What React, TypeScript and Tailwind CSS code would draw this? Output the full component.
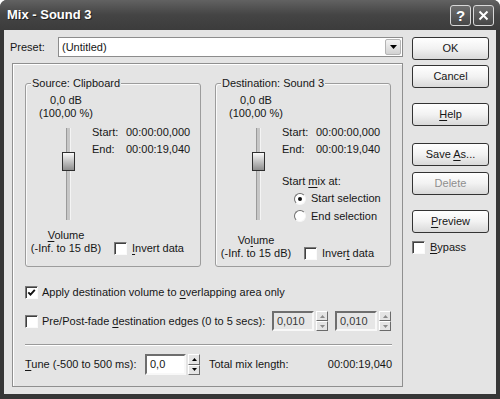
import type { ReactNode } from "react";

// underlined accelerator letter
const U = ({ children }: { children: ReactNode }) => (
  <span className="underline decoration-1 underline-offset-[2px]">{children}</span>
);

const Check = ({ checked = false }: { checked?: boolean }) => (
  <span className="flex h-[13px] w-[13px] shrink-0 items-center justify-center border border-t-[#7a7a7a] border-l-[#7a7a7a] border-b-[#fafafa] border-r-[#fafafa] bg-white shadow-[inset_1px_1px_0_#404040]">
    {checked && (
      <svg width="9" height="9" viewBox="0 0 9 9">
        <path d="M1.3 4.3 L3.5 6.6 L7.8 1.8" fill="none" stroke="#111" strokeWidth="1.9" />
      </svg>
    )}
  </span>
);

const Radio = ({ checked = false }: { checked?: boolean }) => (
  <span className="flex h-[12px] w-[12px] shrink-0 items-center justify-center rounded-full border border-t-[#6e6e6e] border-l-[#6e6e6e] border-b-[#f6f6f6] border-r-[#f6f6f6] bg-white">
    {checked && <span className="h-[4px] w-[4px] rounded-full bg-[#111]" />}
  </span>
);

const Btn = ({ children, disabled = false, mt }: { children: ReactNode; disabled?: boolean; mt: string }) => (
  <div
    className={`flex h-[23px] w-[77px] items-center justify-center rounded-[3px] border border-[#333] bg-gradient-to-b from-white via-[#f2f2f2] to-[#d9d9d9] ${mt} ${disabled ? "text-[#8e8e8e]" : ""}`}
  >
    <span>{children}</span>
  </div>
);

const SpinBtn = ({ up = false, disabled = false }: { up?: boolean; disabled?: boolean }) => (
  <div className="flex flex-1 items-center justify-center border border-t-white border-l-white border-b-[#6a6a6a] border-r-[#6a6a6a] bg-[#e4e4e4]">
    <svg width="5" height="3" viewBox="0 0 5 3">
      <path d={up ? "M0 3 L2.5 0 L5 3Z" : "M0 0 L5 0 L2.5 3Z"} fill={disabled ? "#8a8a8a" : "#000"} />
    </svg>
  </div>
);

const Spin = ({ disabled = false, h }: { disabled?: boolean; h: string }) => (
  <div className={`ml-[2px] flex w-[12px] flex-col ${h}`}>
    <SpinBtn up disabled={disabled} />
    <SpinBtn disabled={disabled} />
  </div>
);

const Slider = () => (
  <div className="relative h-[92px] w-[66px] shrink-0">
    <div className="ml-[40px] h-full w-[5px] border-l border-r border-l-[#9a9a9a] border-r-[#f4f4f4] bg-[#c6c6c6]" />
    <div className="absolute left-[36px] top-[24px] h-[19px] w-[13px] border border-[#2e2e2e] bg-gradient-to-b from-[#fbfbfb] to-[#8e8e8e]" />
  </div>
);

const Group = ({ title, dest = false }: { title: string; dest?: boolean }) => (
  <div className="relative h-[184px] w-[176px] rounded-[3px] border border-[#9c9c9c] pt-[10px] shadow-[inset_1px_1px_0_#fafafa]">
    <span className="absolute -top-[7px] left-[5px] bg-[#e4e4e4] px-[1px]">{title}</span>
    <div className="w-[80px] text-center">
      0,0 dB
      <br />
      (100,00 %)
    </div>
    <div className="mt-[8px] flex">
      <Slider />
      <div className="-mt-[4px] leading-[17px]">
        <div className="flex">
          <span className="w-[34px]">Start:</span>
          <span>00:00:00,000</span>
        </div>
        <div className="flex">
          <span className="w-[34px]">End:</span>
          <span>00:00:19,040</span>
        </div>
        {dest && (
          <>
            <div className="mt-[15px]">
              Start <U>m</U>ix at:
            </div>
            <div className="ml-[12px] flex h-[17px] items-center">
              <Radio checked />
              <span className="ml-[5px]">Start selection</span>
            </div>
            <div className="ml-[12px] flex h-[18px] items-center">
              <Radio />
              <span className="ml-[5px]">End selection</span>
            </div>
          </>
        )}
      </div>
    </div>
    <div className="mt-[9px] flex items-end">
      <div className="w-[80px] text-center">
        {dest ? (
          <>
            Vo<U>l</U>ume
          </>
        ) : (
          <>
            <U>V</U>olume
          </>
        )}
        <br />
        (-Inf. to 15 dB)
      </div>
      <span className="ml-[8px]">
        <Check />
      </span>
      <span className="ml-[5px]">
        {dest ? (
          <>
            Inver<U>t</U> data
          </>
        ) : (
          <>
            <U>I</U>nvert data
          </>
        )}
      </span>
    </div>
  </div>
);

export default function App() {
  return (
    <div className="h-[399px] w-[500px] bg-white font-['Liberation_Sans',Arial,sans-serif] text-[11px] leading-[13px] text-[#161616]">
      <div className="flex h-full flex-col overflow-hidden rounded-t-[7px] bg-[#363636]">
        {/* title bar */}
        <div className="flex h-[30px] shrink-0 items-center bg-gradient-to-b from-[#626262] via-[#444] to-[#3c3c3c] pl-[7px] pr-[6px]">
          <span className="text-[13px] font-bold leading-[16px] text-white [text-shadow:1px_1px_0_#222]">Mix - Sound 3</span>
          <div className="ml-auto flex gap-[2px]">
            <div className="flex h-[21px] w-[21px] items-center justify-center rounded-[3px] border border-[#d8d8d8] bg-gradient-to-b from-[#6e6e6e] to-[#474747] text-[15px] font-bold leading-none text-white">
              ?
            </div>
            <div className="flex h-[21px] w-[21px] items-center justify-center rounded-[3px] border border-[#d8d8d8] bg-gradient-to-b from-[#6e6e6e] to-[#474747]">
              <svg width="11" height="11" viewBox="0 0 11 11">
                <path d="M1.5 1.5 L9.5 9.5 M9.5 1.5 L1.5 9.5" stroke="#fff" strokeWidth="2" />
              </svg>
            </div>
          </div>
        </div>

        {/* body */}
        <div className="mx-[4px] mb-[5px] flex flex-1 bg-[#e4e4e4] pl-[6px] pt-[7px]">
          {/* left column */}
          <div className="flex w-[393px] flex-col">
            <div className="flex h-[20px] items-center">
              <span className="w-[48px]">Preset:</span>
              <div className="flex h-[20px] flex-1 items-center border border-[#8c8c8c] bg-white pl-[3px]">
                <span>(Untitled)</span>
                <div className="ml-auto mr-[1px] flex h-[16px] w-[16px] items-center justify-center rounded-[2px] border border-[#b4b4b4] bg-gradient-to-b from-[#f4f4f4] to-[#d2d2d2]">
                  <svg width="7" height="4" viewBox="0 0 7 4">
                    <path d="M0 0 L7 0 L3.5 4Z" fill="#000" />
                  </svg>
                </div>
              </div>
            </div>

            <div className="ml-[2px] mt-[6px] h-[324px] border border-[#8f8f8f] pl-[12px] pt-[19px] shadow-[inset_1px_1px_0_#fff]">
              <div className="flex gap-[14px]">
                <Group title="Source: Clipboard" />
                <Group title="Destination: Sound 3" dest />
              </div>

              <div className="mt-[19px] flex h-[13px] items-center">
                <Check checked />
                <span className="ml-[4px]">
                  Apply destination volume to <U>o</U>verlapping area only
                </span>
              </div>

              <div className="mt-[12px] flex h-[20px] items-center">
                <Check />
                <span className="ml-[4px] w-[230px]">
                  Pre/Post-fade <U>d</U>estination edges (0 to 5 secs):
                </span>
                <div className="flex h-[20px] w-[42px] items-center border-2 border-t-[#6e6e6e] border-l-[#6e6e6e] border-b-[#f8f8f8] border-r-[#f8f8f8] bg-[#e6e6e6] pl-[3px] text-[#3a3a3a]">
                  0,010
                </div>
                <Spin disabled h="h-[20px]" />
                <div className="ml-[7px] flex h-[20px] w-[42px] items-center border-2 border-t-[#6e6e6e] border-l-[#6e6e6e] border-b-[#f8f8f8] border-r-[#f8f8f8] bg-[#e6e6e6] pl-[3px] text-[#3a3a3a]">
                  0,010
                </div>
                <Spin disabled h="h-[20px]" />
              </div>

              <div className="mt-[13px] h-[2px] w-[367px] border-t border-b border-t-[#9a9a9a] border-b-white" />

              <div className="mt-[8px] flex h-[21px] w-[367px] items-center">
                <span className="w-[120px]">
                  <U>T</U>une (-500 to 500 ms):
                </span>
                <div className="flex h-[21px] w-[41px] items-center border-2 border-t-[#6e6e6e] border-l-[#6e6e6e] border-b-[#f8f8f8] border-r-[#f8f8f8] bg-white pl-[3px]">
                  0,0
                </div>
                <Spin h="h-[21px]" />
                <span className="ml-[9px]">Total mix length:</span>
                <span className="flex-1 text-right">00:00:19,040</span>
              </div>
            </div>
          </div>

          {/* right column */}
          <div className="ml-[9px] flex w-[77px] flex-col">
            <Btn mt="mt-0">OK</Btn>
            <Btn mt="mt-[5px]">Cancel</Btn>
            <Btn mt="mt-[15px]">
              <U>H</U>elp
            </Btn>
            <Btn mt="mt-[17px]">
              Save <U>A</U>s...
            </Btn>
            <Btn mt="mt-[6px]" disabled>
              Delete
            </Btn>
            <Btn mt="mt-[15px]">
              <U>P</U>review
            </Btn>
            <div className="mt-[8px] flex items-center">
              <Check />
              <span className="ml-[5px]">
                <U>B</U>ypass
              </span>
            </div>
          </div>
        </div>
      </div>
    </div>
  );
}
